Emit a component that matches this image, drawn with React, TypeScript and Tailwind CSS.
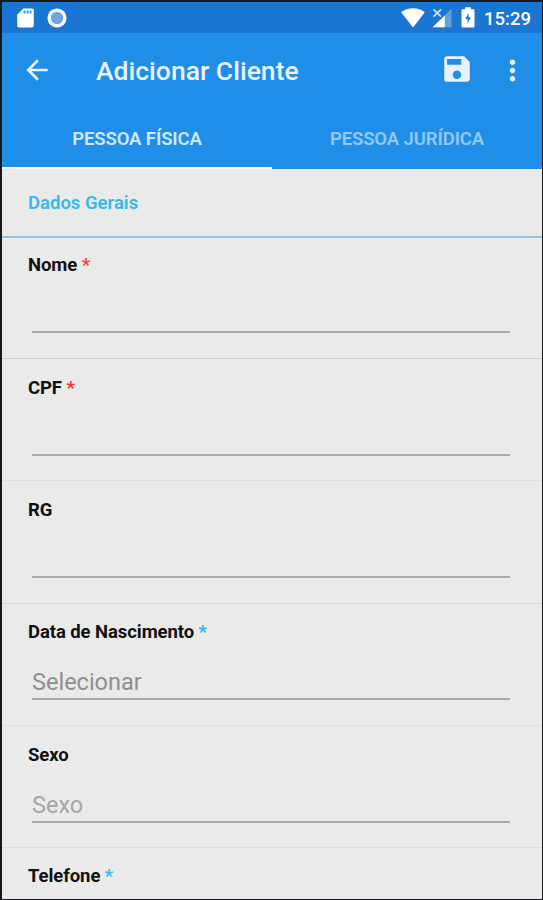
import { MdArrowBack, MdMoreVert, MdSave } from "react-icons/md";

type Field = {
  label: string;
  mark?: string;
  placeholder?: string;
  hintStyle?: string;
  rowStyle: string;
};

const fields: Field[] = [
  { label: "Nome", mark: "text-[#f4433c]", rowStyle: "h-[121px] pt-4 border-[#cfcfcf]" },
  { label: "CPF", mark: "text-[#f4332c]", rowStyle: "h-[122px] pt-[18px] border-[#dedede]" },
  { label: "RG", rowStyle: "h-[123px] pt-[18px] border-[#dadada]" },
  {
    label: "Data de Nascimento",
    mark: "text-[#29b6f6]",
    placeholder: "Selecionar",
    hintStyle: "text-[#8f8f8f]",
    rowStyle: "h-[122px] pt-[17px] border-[#dedede]",
  },
  {
    label: "Sexo",
    placeholder: "Sexo",
    hintStyle: "text-[#a6a6a6]",
    rowStyle: "h-[122px] pt-[18px] border-[#dddddd]",
  },
];

function StatusBar() {
  return (
    <div className="h-[31px] shrink-0 bg-[#1976d2] pl-[15px] pr-[11px] flex items-center justify-between text-white">
      <div className="flex items-center gap-[13px]">
        {/* SD card */}
        <svg width="17" height="20" viewBox="0 0 17 20" fill="none">
          <path d="M6.5 0.5H15a1.8 1.8 0 0 1 1.8 1.8v15.4a1.8 1.8 0 0 1-1.8 1.8H2a1.8 1.8 0 0 1-1.8-1.8V6.6z" fill="white" />
          <path d="M6.5 2.5h2v3h-2zM9.6 2.5h2v3h-2zM12.7 2.5h1.8v3h-1.8z" fill="#4d90d8" />
        </svg>
        <svg width="20" height="20" viewBox="0 0 20 20">
          <circle cx="10" cy="10" r="9.6" fill="white" />
          <circle cx="10" cy="10" r="6.2" fill="#6ca5e2" />
        </svg>
      </div>
      <div className="flex items-center">
        {/* Wifi */}
        <svg width="24" height="20" viewBox="0 0 24 20">
          <path d="M12 19.4 0.2 4.2C3.4 1.6 7.6 0.2 12 0.2s8.6 1.4 11.8 4z" fill="white" />
        </svg>
        {/* Sinal */}
        <svg className="ml-[7px]" width="20" height="20" viewBox="0 0 20 20">
          <path d="M19.5 0.8v18.5H0.5z" fill="white" fillOpacity="0.3" />
          <path d="M12.8 7.4v11.9H0.5z" fill="white" />
          <path d="M1.5 1.4l7.5 7.2M9 1.4L1.5 8.6" stroke="white" strokeOpacity="0.8" strokeWidth="1.8" />
        </svg>
        {/* Bateria */}
        <svg className="ml-[9px]" width="14" height="21" viewBox="0 0 14 21">
          <path d="M4 0.3h6v2h2.2a1.3 1.3 0 0 1 1.3 1.3v15.6a1.3 1.3 0 0 1-1.3 1.3H1.8a1.3 1.3 0 0 1-1.3-1.3V3.6a1.3 1.3 0 0 1 1.3-1.3H4z" fill="white" />
          <path d="M7.6 6 4.3 12h2.3v4.6l3.3-6.3H7.6z" fill="#1976d2" />
        </svg>
        <span className="ml-[9px] text-[18.5px] leading-none font-medium whitespace-nowrap pt-[3px]">15:29</span>
      </div>
    </div>
  );
}

function AppBar() {
  return (
    <header className="h-[75px] shrink-0 bg-[#1f8ee8] pl-[19px] pr-[13px] flex items-center text-[#eaf3fd]">
      <MdArrowBack size={32} className="mb-[2px]" />
      <h1 className="ml-[43px] flex-1 pt-px text-[26.5px] font-medium leading-none whitespace-nowrap">Adicionar Cliente</h1>
      <MdSave size={34} className="mb-[3px]" />
      <MdMoreVert size={33} className="ml-[22px] mb-px" />
    </header>
  );
}

function Tabs() {
  return (
    <nav className="h-[61px] shrink-0 bg-[#1f8ee8] grid grid-cols-2 text-[18.5px] font-semibold tracking-[-0.1px] whitespace-nowrap">
      <button className="pt-1 flex items-center justify-center border-b-2 border-[#f5f8fb] text-[#d5e8fb]">PESSOA FÍSICA</button>
      <button className="pt-1 flex items-center justify-center border-b-2 border-transparent text-[#96c8f5]">PESSOA JURÍDICA</button>
    </nav>
  );
}

function Label({ label, mark }: { label: string; mark?: string }) {
  return (
    <div className="h-6 flex items-center text-[18.5px] font-bold tracking-[-0.08px] text-[#111111] whitespace-pre">
      {label}
      {mark && <span className={mark}> *</span>}
    </div>
  );
}

export default function App() {
  return (
    <div className="w-[543px] h-[900px] flex flex-col overflow-hidden bg-[#eaeaea] border-t-2 border-l-2 border-r border-b border-[#16181c] font-['Roboto',sans-serif]">
      <StatusBar />
      <AppBar />
      <Tabs />

      <main className="flex-1 overflow-hidden">
        <div className="h-[69px] pt-[2px] pl-[26px] flex items-center border-b-2 border-[#8fc3e8] text-[18.5px] font-semibold text-[#35b8ea]">
          Dados Gerais
        </div>

        {fields.map((field) => (
          <div key={field.label} className={`border-b pl-[26px] pr-8 ${field.rowStyle}`}>
            <Label label={field.label} mark={field.mark} />
            <div className={`ml-1 h-[55px] flex items-end border-b-2 border-[#ababab] text-[23.5px] leading-[32px] ${field.hintStyle ?? ""}`}>
              {field.placeholder}
            </div>
          </div>
        ))}

        <div className="pl-[26px] pt-[17px]">
          <Label label="Telefone" mark="text-[#35b8ea]" />
        </div>
      </main>
    </div>
  );
}
